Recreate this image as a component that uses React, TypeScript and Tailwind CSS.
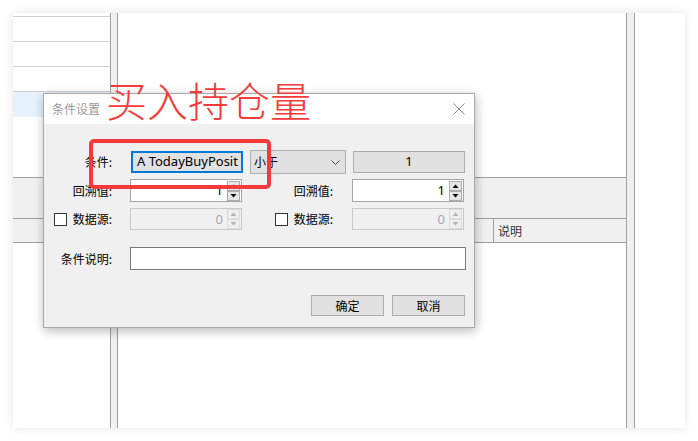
import React from "react";

const FONT = { fontFamily: '"Noto Sans", "Noto Sans CJK SC", sans-serif' };
const CJK = { fontFamily: '"Noto Sans CJK SC", "Noto Sans", sans-serif' };

function SpinArrows({ disabled }: { disabled?: boolean }) {
  const btn = disabled
    ? "h-[10px] w-[13px] border border-[#dcdcdc] bg-[#efefef] flex items-center justify-center"
    : "h-[10px] w-[13px] border border-[#adadad] bg-[#e5e5e5] flex items-center justify-center";
  const fill = disabled ? "#b4b4b4" : "#000";
  return (
    <div className="flex flex-col justify-center pr-[1px]">
      <div className={btn}>
        <svg width="7" height="4" viewBox="0 0 7 4">
          <path d="M0.5 4 L3.5 0.5 L6.5 4 Z" fill={fill} />
        </svg>
      </div>
      <div className={btn}>
        <svg width="7" height="4" viewBox="0 0 7 4">
          <path d="M0.5 0 L3.5 3.5 L6.5 0 Z" fill={fill} />
        </svg>
      </div>
    </div>
  );
}

function Spinner({ value, disabled }: { value: string; disabled?: boolean }) {
  return (
    <div
      className={
        disabled
          ? "w-[112px] h-[22px] border border-[#c9c9c9] bg-[#f0f0f0] flex items-center"
          : "w-[112px] h-[23px] border border-[#a5a5a5] bg-white flex items-center"
      }
    >
      <div
        className={
          disabled
            ? "flex-1 text-right pr-[4px] text-[13px] leading-none text-[#a3aab5]"
            : "flex-1 text-right pr-[4px] text-[13px] leading-none text-black"
        }
        style={FONT}
      >
        {value}
      </div>
      <SpinArrows disabled={disabled} />
    </div>
  );
}

function Checkbox() {
  return <div className="w-[13px] h-[13px] border border-[#333] bg-white" />;
}

export default function App() {
  return (
    <div className="relative w-[698px] h-[441px] bg-white p-[13px] overflow-hidden" style={CJK}>
      {/* main window */}
      <div className="w-[672px] h-[415px] bg-[#f0f0f0] flex shadow-[0_0_10px_rgba(0,0,0,0.1)]">
        {/* left column */}
        <div className="w-[98px] h-full flex flex-col border-r border-[#a0a0a0]">
          <div className="h-[165px] bg-white border-b border-[#a0a0a0] flex flex-col">
            <div className="h-[4px] border-b border-[#d0d0d0]" />
            <div className="h-[25px] border-b border-[#d0d0d0]" />
            <div className="h-[25px] border-b border-[#d0d0d0]" />
            <div className="h-[25px] border-b border-[#d0d0d0]" />
            <div className="h-[25px] bg-[#e5f1fb]" />
          </div>
          <div className="h-[40px]" />
          <div className="h-[25px] border-y border-[#a0a0a0] bg-[#f0f0f0]" />
          <div className="flex-1 bg-white" />
        </div>
        {/* splitter */}
        <div className="w-[6px]" />
        {/* right column */}
        <div className="w-[510px] h-full flex flex-col border-x border-[#a0a0a0]">
          <div className="h-[165px] bg-white border-b border-[#a0a0a0]" />
          <div className="h-[40px]" />
          <div className="h-[25px] border-y border-[#a0a0a0] bg-[#f0f0f0] flex">
            <div className="w-[376px] border-r border-[#a0a0a0]" />
            <div className="pl-[4px] flex items-center text-[12px] text-[#333]">说明</div>
          </div>
          <div className="flex-1 bg-white" />
        </div>
        <div className="w-[7px]" />
        <div className="flex-1 bg-white border-l border-[#a0a0a0]" />
      </div>

      {/* dialog */}
      <div className="absolute left-[43px] top-[93px] w-[432px] h-[235px] border border-[#a8a8a8] flex flex-col shadow-[1px_3px_10px_rgba(0,0,0,0.28)]">
        <div className="h-[30px] bg-white flex items-center justify-between pl-[8px] pr-[9px]">
          <span className="text-[12px] text-[#9a9a9a]">条件设置</span>
          <svg width="12" height="12" viewBox="0 0 12 12">
            <path d="M0.5 0.5 L11.5 11.5 M11.5 0.5 L0.5 11.5" stroke="#8a8a8a" strokeWidth="1" />
          </svg>
        </div>
        <div className="flex-1 bg-[#f0f0f0] flex flex-col text-[12px] text-black">
          {/* row 1 */}
          <div className="mt-[26px] h-[24px] flex items-center">
            <div className="w-[70px] text-right pr-[2px]">条件:</div>
            <div
              className="ml-[17px] w-[112px] h-[22px] border-2 border-[#0078d7] bg-[#e1e1e1] flex items-center pl-[4px] overflow-hidden whitespace-nowrap text-[13px]"
              style={FONT}
            >
              A TodayBuyPosit
            </div>
            <div className="ml-[7px] w-[96px] h-[24px] border border-[#adadad] bg-[#e1e1e1] flex items-center justify-between pl-[3px] pr-[5px]">
              <span>小于</span>
              <svg width="9" height="5" viewBox="0 0 9 5">
                <path d="M0.5 0.5 L4.5 4.5 L8.5 0.5" stroke="#444" strokeWidth="1" fill="none" />
              </svg>
            </div>
            <div
              className="ml-[7px] w-[112px] h-[22px] border border-[#adadad] bg-[#e1e1e1] flex items-center justify-center text-[13px]"
              style={FONT}
            >
              1
            </div>
          </div>
          {/* row 2 */}
          <div className="mt-[5px] h-[23px] flex items-center">
            <div className="w-[70px] text-right pr-[2px]">回溯值:</div>
            <div className="ml-[16px]">
              <Spinner value="1" />
            </div>
            <div className="w-[94px] text-right pr-[3px]">回溯值:</div>
            <div className="ml-[16px]">
              <Spinner value="1" />
            </div>
          </div>
          {/* row 3 */}
          <div className="mt-[6px] h-[22px] flex items-center">
            <div className="w-[70px] flex items-center justify-end gap-[6px] pr-[2px]">
              <Checkbox />
              <span>数据源:</span>
            </div>
            <div className="ml-[16px]">
              <Spinner value="0" disabled />
            </div>
            <div className="w-[94px] flex items-center justify-end gap-[6px] pr-[3px]">
              <Checkbox />
              <span>数据源:</span>
            </div>
            <div className="ml-[16px]">
              <Spinner value="0" disabled />
            </div>
          </div>
          {/* row 4 */}
          <div className="mt-[17px] h-[23px] flex items-center">
            <div className="w-[70px] text-right pr-[2px]">条件说明:</div>
            <div className="ml-[16px] w-[336px] h-[23px] border border-[#7a7a7a] bg-white" />
          </div>
          {/* buttons */}
          <div className="mt-[25px] flex justify-end gap-[8px] pr-[9px]">
            <div className="w-[73px] h-[21px] border border-[#adadad] bg-[#e1e1e1] flex items-center justify-center">
              确定
            </div>
            <div className="w-[73px] h-[21px] border border-[#adadad] bg-[#e1e1e1] flex items-center justify-center">
              取消
            </div>
          </div>
        </div>
      </div>

      {/* red annotations */}
      <div className="absolute left-[89px] top-[139px] w-[182px] h-[50px] border-4 border-[#f43a3a] rounded-[5px]" />
      <div className="absolute left-[106px] top-[79px] text-[41px] leading-[41px] font-light text-[#f43a3a] whitespace-nowrap">
        买入持仓量
      </div>
    </div>
  );
}
